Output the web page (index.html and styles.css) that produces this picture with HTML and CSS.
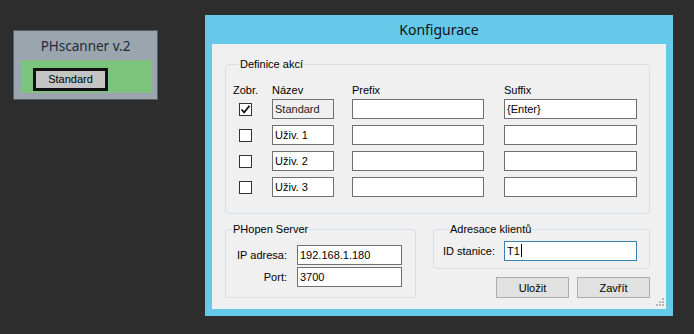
FILE: index.html
```html
<!DOCTYPE html>
<html lang="cs">
<head>
    <meta charset="UTF-8">
    <title>PHscanner</title>
    <link rel="stylesheet" href="styles.css">
</head>
<body>
    <div class="mini">
        <div class="mini-title">PHscanner v.2</div>
        <div class="mini-band">
            <div class="mini-btn">Standard</div>
        </div>
    </div>

    <div class="dialog">
        <div class="dialog-title">Konfigurace</div>
        <div class="dialog-body">
            <fieldset class="group actions">
                <legend>Definice akcí</legend>
                <div class="row head">
                    <span>Zobr.</span>
                    <span>Název</span>
                    <span>Prefix</span>
                    <span>Suffix</span>
                </div>
                <div class="row">
                    <span class="check on">
                        <svg width="11" height="11" viewBox="0 0 11 11"><path d="M1.5 5.5 L4.2 8.3 L9.5 1.8" fill="none" stroke="#111" stroke-width="1.8"/></svg>
                    </span>
                    <span class="field name readonly">Standard</span>
                    <span class="field prefix"></span>
                    <span class="field suffix">{Enter}</span>
                </div>
                <div class="row">
                    <span class="check"></span>
                    <span class="field name">Uživ. 1</span>
                    <span class="field prefix"></span>
                    <span class="field suffix"></span>
                </div>
                <div class="row">
                    <span class="check"></span>
                    <span class="field name">Uživ. 2</span>
                    <span class="field prefix"></span>
                    <span class="field suffix"></span>
                </div>
                <div class="row">
                    <span class="check"></span>
                    <span class="field name">Uživ. 3</span>
                    <span class="field prefix"></span>
                    <span class="field suffix"></span>
                </div>
            </fieldset>

            <div class="lower">
                <fieldset class="group server">
                    <legend>PHopen Server</legend>
                    <div class="pair">
                        <label>IP adresa:</label>
                        <span class="field wide">192.168.1.180</span>
                    </div>
                    <div class="pair">
                        <label>Port:</label>
                        <span class="field wide">3700</span>
                    </div>
                </fieldset>

                <div class="right-col">
                    <fieldset class="group clients">
                        <legend>Adresace klientů</legend>
                        <div class="pair">
                            <label>ID stanice:</label>
                            <span class="field wide focus">T1<i class="caret"></i></span>
                        </div>
                    </fieldset>
                    <div class="buttons">
                        <button>Uložit</button>
                        <button>Zavřít</button>
                    </div>
                </div>
            </div>

            <svg class="grip" width="8" height="8" viewBox="0 0 8 8" fill="#b8b8b8">
                <rect x="6" y="0" width="2" height="2"/>
                <rect x="3" y="3" width="2" height="2"/><rect x="6" y="3" width="2" height="2"/>
                <rect x="0" y="6" width="2" height="2"/><rect x="3" y="6" width="2" height="2"/><rect x="6" y="6" width="2" height="2"/>
            </svg>
        </div>
    </div>
</body>
</html>
```

FILE: styles.css
```css
body {
    margin: 0;
    width: 694px;
    height: 334px;
    background: #2d2d2d;
    display: flex;
    align-items: flex-start;
    font-family: "Liberation Sans", Arial, sans-serif;
    font-size: 11px;
    color: #000;
    overflow: hidden;
}

/* small scanner window */
.mini {
    margin: 30px 0 0 13px;
    width: 145px;
    height: 70px;
    box-sizing: border-box;
    border: 1px solid #5b6167;
    background: #9aa5ad;
}
.mini-title {
    height: 29px;
    line-height: 30px;
    text-align: center;
    font-family: "Noto Sans", sans-serif;
    font-size: 13.5px;
    color: #1f2b38;
}
.mini-band {
    margin-left: 7px;
    width: 131px;
    height: 33px;
    box-sizing: border-box;
    background: #7cc47c;
    border-top: 1px solid #8fb88f;
    border-bottom: 1px solid #8fb88f;
    padding: 7px 0 0 12px;
}
.mini-btn {
    width: 75px;
    height: 23px;
    box-sizing: border-box;
    border: 3px solid #111;
    background: #c4c4c4;
    text-align: center;
    line-height: 17px;
    font-size: 11px;
}

/* config dialog */
.dialog {
    margin: 15px 0 0 47px;
    width: 468px;
    height: 301px;
    box-sizing: border-box;
    background: #65c9e9;
    padding: 0 7px 7px;
}
.dialog-title {
    height: 29px;
    line-height: 30px;
    text-align: center;
    font-family: "Noto Sans", sans-serif;
    font-size: 14px;
    color: #111;
}
.dialog-body {
    position: relative;
    height: 265px;
    box-sizing: border-box;
    background: #f0f0f0;
    padding: 13px 0 0 13px;
}

.group {
    margin: 0;
    padding: 0;
    border: 1px solid #d8dfe4;
    border-radius: 3px;
    box-sizing: border-box;
    min-width: 0;
}
.group legend {
    margin-left: 6px;
    padding: 0 1px;
    line-height: 14px;
}

.actions {
    width: 425px;
    padding: 12px 0 16px 7px;
}
.row {
    display: grid;
    grid-template-columns: 39px 80px 152px 133px;
    align-items: center;
    margin-top: 6px;
}
.row.head {
    margin: 0 0 -4px;
    line-height: 14px;
}

.check {
    margin-left: 6px;
    width: 13px;
    height: 13px;
    box-sizing: border-box;
    border: 1px solid #333;
    background: #fff;
    display: flex;
    align-items: center;
    justify-content: center;
}

.field {
    display: block;
    height: 20px;
    box-sizing: border-box;
    border: 1px solid #707070;
    background: #fff;
    padding-left: 2px;
    line-height: 18px;
    white-space: nowrap;
}
.field.name { width: 62px; }
.field.prefix { width: 132px; }
.field.suffix { width: 133px; }
.field.readonly {
    background: #f0f0f0;
    color: #222;
}

.lower {
    display: flex;
    gap: 17px;
    margin-top: 8px;
}
.server {
    width: 191px;
    padding: 9px 0 10px;
}
.pair {
    display: flex;
    align-items: center;
}
.pair + .pair { margin-top: 2px; }
.server label {
    width: 61px;
    text-align: right;
    margin-right: 10px;
}
.field.wide {
    width: 105px;
}

.right-col {
    width: 217px;
}
.clients {
    padding: 5px 0 7px 9px;
}
.clients label {
    width: 61px;
}
.clients .field.wide {
    width: 133px;
}
.field.focus {
    border-color: #3c7fb1;
}
.caret {
    display: inline-block;
    width: 1px;
    height: 13px;
    background: #000;
    vertical-align: -2px;
    margin-left: 1px;
}

.buttons {
    display: flex;
    justify-content: flex-end;
    gap: 8px;
    margin-top: 8px;
}
.buttons button {
    width: 73px;
    height: 21px;
    border: 1px solid #adadad;
    background: #e1e1e1;
    font-family: "Liberation Sans", Arial, sans-serif;
    font-size: 11px;
    color: #000;
    padding: 0;
}

.grip {
    position: absolute;
    right: 2px;
    bottom: 3px;
}
```
